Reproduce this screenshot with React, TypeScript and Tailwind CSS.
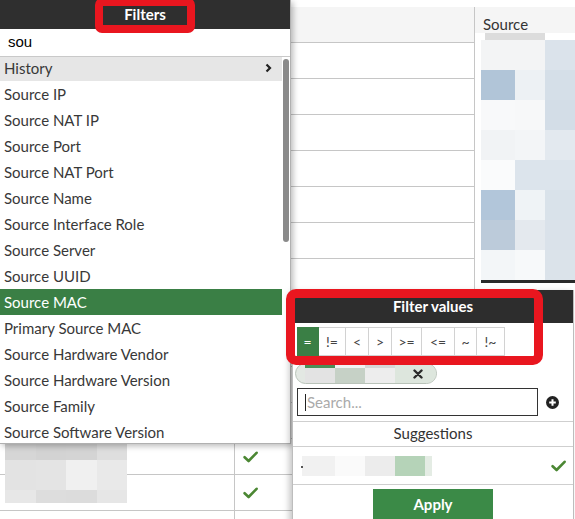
import React from "react";

const fields = [
  "History",
  "Source IP",
  "Source NAT IP",
  "Source Port",
  "Source NAT Port",
  "Source Name",
  "Source Interface Role",
  "Source Server",
  "Source UUID",
  "Source MAC",
  "Primary Source MAC",
  "Source Hardware Vendor",
  "Source Hardware Version",
  "Source Family",
  "Source Software Version",
];

const operators: { label: string; w: string; active?: boolean }[] = [
  { label: "=", w: "w-[22px]", active: true },
  { label: "!=", w: "w-[27px]" },
  { label: "<", w: "w-[23px]" },
  { label: ">", w: "w-[23px]" },
  { label: ">=", w: "w-[30px]" },
  { label: "<=", w: "w-[33px]" },
  { label: "~", w: "w-[22px]" },
  { label: "!~", w: "w-[28px]" },
];

// masked column of the "Source" field (pixelated values)
const sourceCells = [
  ["bg-[#f3f4f5]", "bg-[#f3f4f5]", "bg-[#dbe3eb]"],
  ["bg-[#b1c5d8]", "bg-[#edf1f4]", "bg-[#d5dfe8]"],
  ["bg-[#f8f9fa]", "bg-[#f7f8f9]", "bg-[#d3dde7]"],
  ["bg-[#f1f3f5]", "bg-[#f3f5f7]", "bg-[#e3e9ef]"],
  ["bg-[#fafbfc]", "bg-[#dce4ec]", "bg-[#dce4ec]"],
  ["bg-[#b2c6da]", "bg-[#eff3f6]", "bg-[#d9e2ea]"],
  ["bg-[#bccbda]", "bg-[#e4e9ee]", "bg-[#dae2ea]"],
  ["bg-[#f3f6f8]", "bg-[#f7f9fa]", "bg-[#dbe3ea]"],
];

function Check() {
  return (
    <svg width="15" height="12" viewBox="0 0 15 12">
      <path
        d="M1.6 6.2 L5.6 10 L13.6 1.8"
        fill="none"
        stroke="#4b8733"
        strokeWidth="2.6"
        strokeLinecap="round"
        strokeLinejoin="round"
      />
    </svg>
  );
}

function Row({ children, first }: { children?: React.ReactNode; first?: React.ReactNode }) {
  return (
    <div className="relative flex h-[36px] border-b border-[#c6c6c6]">
      <div className="relative w-[235px] border-r border-[#c6c6c6]">{first}</div>
      <div className="flex flex-1 items-center pl-[8px]">{children}</div>
    </div>
  );
}

export default function App() {
  return (
    <div className="relative h-[519px] w-[575px] overflow-hidden bg-white font-['Lato',sans-serif] text-[#333]">
      {/* table underneath */}
      <div className="flex pt-[7px]">
        <div className="w-[474px]">
          <div className="h-[36px] border-b border-[#c6c6c6] bg-[#f5f5f5]" />
          {Array.from({ length: 11 }).map((_, i) => (
            <Row key={i} />
          ))}
          <Row
            first={
              <div className="absolute left-[5px] top-[4px] grid h-[60px] w-[122px] grid-cols-4 grid-rows-[17px_30px_13px]">
                <div className="bg-[#d6d6d6]" />
                <div className="bg-[#d3d3d3]" />
                <div className="bg-[#d4d4d4]" />
                <div className="bg-[#dedede]" />
                <div className="bg-[#e3e3e3]" />
                <div className="bg-[#e4e4e4]" />
                <div className="bg-[#f0f0f0]" />
                <div className="bg-[#e9e9e9]" />
                <div className="bg-[#e7e7e7]" />
                <div className="bg-[#dddddd]" />
                <div className="bg-[#dcdcdc]" />
                <div className="bg-[#e6e6e6]" />
              </div>
            }
          >
            <Check />
          </Row>
          <Row>
            <Check />
          </Row>
          <Row />
        </div>
        <div className="flex-1 border-l border-[#c6c6c6]">
          <div className="h-[26px] bg-[#f5f5f5] pl-[8px] pt-[8px] text-[15px] leading-[18px] text-[#333]">
            Source
          </div>
          <div className="ml-[6px]">
            <div className="ml-[4px] h-[7px] w-[60px] bg-[#dcdcdc]" />
            <div className="grid grid-cols-[34px_30px_30px]">
              {sourceCells.flat().map((c, i) => (
                <div key={i} className={`h-[30px] ${c}`} />
              ))}
            </div>
            <div className="h-[3px] bg-[#2a2a2a]" />
          </div>
        </div>
      </div>

      {/* field picker */}
      <div className="absolute left-0 top-0 flex h-[444px] w-[291px] flex-col border-b border-r border-[#b0b0b0] bg-white shadow-[2px_2px_6px_rgba(0,0,0,0.28)]">
        <div className="flex h-[29px] items-center justify-center bg-[#2f2f2f] text-[15px] font-bold text-white">
          Filters
        </div>
        <div className="flex h-[28px] items-center border-b border-[#c9c9c9] pl-[8px] font-['Liberation_Sans',sans-serif] text-[15px] text-black">
          sou
        </div>
        <div className="flex flex-1 overflow-hidden">
          <div className="w-[282px] overflow-hidden">
            <div className="-mt-[2px]">
              {fields.map((f) => {
                const history = f === "History";
                const selected = f === "Source MAC";
                return (
                  <div
                    key={f}
                    className={`flex h-[26px] items-center justify-between pl-[4px] pr-[10px] text-[15px] ${
                      history ? "bg-[#e6e6e6] text-[#383838]" : selected ? "bg-[#3a7f45] text-white" : "text-[#383838]"
                    }`}
                  >
                    <span>{f}</span>
                    {history && (
                      <svg width="7" height="10" viewBox="0 0 7 10">
                        <path d="M1.5 1.5 L5 5 L1.5 8.5" fill="none" stroke="#222" strokeWidth="2.2" />
                      </svg>
                    )}
                  </div>
                );
              })}
            </div>
          </div>
          <div className="flex flex-1 justify-center pt-[2px]">
            <div className="h-[183px] w-[6px] rounded-full bg-[#8a8a8a]" />
          </div>
        </div>
      </div>

      {/* value picker */}
      <div className="absolute left-[292px] top-[290px] flex h-[240px] w-[282px] flex-col border-l border-r border-[#bdbdbd] bg-white shadow-[-3px_2px_6px_rgba(0,0,0,0.22)]">
        <div className="flex h-[33px] items-center justify-center bg-[#2d2d2d] text-[15px] font-bold text-white">
          Filter values
        </div>
        <div className="flex pl-[4px] pt-[4px]">
          {operators.map((o) => (
            <div
              key={o.label}
              className={`flex h-[29px] items-center justify-center border-y border-r text-[14px] ${o.w} ${
                o.active ? "border-[#3a7f45] bg-[#3a7f45] text-white" : "border-[#d2d2d2] text-[#444]"
              }`}
            >
              {o.label}
            </div>
          ))}
        </div>
        <div className="ml-[2px] mt-[7px] flex h-[21px] w-[142px] items-stretch overflow-hidden rounded-full border border-[#b9c3b9] bg-[#e3e8e3]">
          <div className="w-[9px]" />
          <div className="flex w-[30px] flex-col">
            <div className="h-[4px] bg-[#4b8f57]" />
            <div className="flex-1 bg-[#e3e3e3]" />
          </div>
          <div className="flex w-[30px] flex-col">
            <div className="h-[4px] bg-[#f2f2f2]" />
            <div className="flex-1 bg-[#c6d1c6]" />
          </div>
          <div className="flex w-[30px] flex-col">
            <div className="h-[4px] bg-[#d6d6d6]" />
            <div className="flex-1 bg-[#ededed]" />
          </div>
          <div className="flex flex-1 items-center justify-center bg-[#dde6dd] pl-[4px]">
            <svg width="10" height="10" viewBox="0 0 10 10">
              <path d="M1.5 1.5 L8.5 8.5 M8.5 1.5 L1.5 8.5" stroke="#2a2a2a" strokeWidth="2.4" strokeLinecap="round" />
            </svg>
          </div>
        </div>
        <div className="ml-[4px] mt-[4px] flex items-center">
          <div className="flex h-[28px] w-[241px] items-center border border-[#333] pl-[8px] text-[15px] text-[#aaa]">
            <span className="-ml-[1px] mr-[1px] h-[17px] w-px bg-[#222]" />
            Search...
          </div>
          <svg className="ml-[8px]" width="13" height="13" viewBox="0 0 13 13">
            <circle cx="6.5" cy="6.5" r="6.5" fill="#222" />
            <path d="M6.5 3.2 V9.8 M3.2 6.5 H9.8" stroke="#fff" strokeWidth="2" />
          </svg>
        </div>
        <div className="mt-[5px] flex h-[26px] items-center justify-center border-y border-[#cfcfcf] pb-[1px] text-[15px] text-[#333]">
          Suggestions
        </div>
        <div className="flex h-[38px] items-center justify-between border-b border-[#cfcfcf] pl-[9px] pr-[7px]">
          <div className="relative flex h-[20px] w-[130px]">
            <div className="absolute -left-[1px] top-[10px] h-[2px] w-[2px] bg-[#555]" />
            <div className="w-[33px] bg-[#f1f1f1]" />
            <div className="w-[30px] bg-[#fafafa]" />
            <div className="w-[30px] bg-[#ececec]" />
            <div className="w-[30px] bg-[#b5d3b8]" />
            <div className="flex-1 bg-[#e4ece4]" />
          </div>
          <Check />
        </div>
        <div className="mx-auto mt-[4px] flex h-[30px] w-[120px] items-center justify-center bg-[#3b8a47] text-[15px] font-bold text-white">
          Apply
        </div>
      </div>

      {/* highlight marks */}
      <div className="absolute left-[95px] top-[-2px] h-[35px] w-[100px] rounded-[7px] border-[8px] border-[#e9161f]" />
      <div className="absolute left-[286px] top-[289px] h-[76px] w-[257px] rounded-[10px] border-[9px] border-[#e9161f]" />
    </div>
  );
}
